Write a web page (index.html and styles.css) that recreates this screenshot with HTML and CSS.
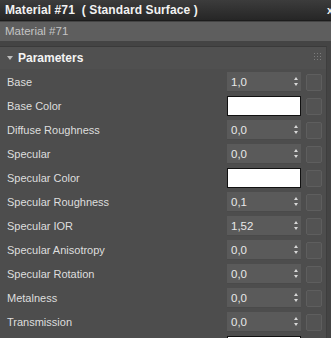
FILE: index.html
```html
<!DOCTYPE html>
<html>
<head>
<meta charset="utf-8">
<link rel="stylesheet" href="styles.css">
</head>
<body>
<div class="panel">
  <div class="titlebar">
    <span class="title">Material #71&nbsp; ( Standard Surface )</span>
    <span class="close">x</span>
  </div>
  <div class="namefield">Material #71</div>
  <div class="section">
    <div class="section-head">
      <span class="tri"></span>
      <span class="section-title">Parameters</span>
      <svg class="grip" width="7" height="7" viewBox="0 0 7 7"><g fill="#7c7c7c"><rect x="0" y="0" width="1" height="1"/><rect x="3" y="0" width="1" height="1"/><rect x="6" y="0" width="1" height="1"/><rect x="0" y="3" width="1" height="1"/><rect x="3" y="3" width="1" height="1"/><rect x="6" y="3" width="1" height="1"/><rect x="0" y="6" width="1" height="1"/><rect x="3" y="6" width="1" height="1"/><rect x="6" y="6" width="1" height="1"/></g></svg>
    </div>
    <div class="rows">
      <div class="row"><span class="label">Base</span><div class="spin"><span>1,0</span><span class="arrows"></span></div><span class="btn"></span></div>
      <div class="row"><span class="label">Base Color</span><div class="swatch"></div><span class="btn"></span></div>
      <div class="row"><span class="label">Diffuse Roughness</span><div class="spin"><span>0,0</span><span class="arrows"></span></div><span class="btn"></span></div>
      <div class="row"><span class="label">Specular</span><div class="spin"><span>0,0</span><span class="arrows"></span></div><span class="btn"></span></div>
      <div class="row"><span class="label">Specular Color</span><div class="swatch"></div><span class="btn"></span></div>
      <div class="row"><span class="label">Specular Roughness</span><div class="spin"><span>0,1</span><span class="arrows"></span></div><span class="btn"></span></div>
      <div class="row"><span class="label">Specular IOR</span><div class="spin"><span>1,52</span><span class="arrows"></span></div><span class="btn"></span></div>
      <div class="row"><span class="label">Specular Anisotropy</span><div class="spin"><span>0,0</span><span class="arrows"></span></div><span class="btn"></span></div>
      <div class="row"><span class="label">Specular Rotation</span><div class="spin"><span>0,0</span><span class="arrows"></span></div><span class="btn"></span></div>
      <div class="row"><span class="label">Metalness</span><div class="spin"><span>0,0</span><span class="arrows"></span></div><span class="btn"></span></div>
      <div class="row"><span class="label">Transmission</span><div class="spin"><span>0,0</span><span class="arrows"></span></div><span class="btn"></span></div>
      <div class="row"><span class="label"></span><div class="swatch"></div><span class="btn"></span></div>
    </div>
  </div>
</div>
</body>
</html>
```
FILE: styles.css
```css
html, body {
  margin: 0;
  padding: 0;
  background: #444444;
  overflow: hidden;
}
body {
  width: 331px;
  height: 338px;
  font-family: "Liberation Sans", Arial, sans-serif;
  font-size: 11px;
  color: #dcdcdc;
}
.panel {
  width: 331px;
  display: flex;
  flex-direction: column;
}
.titlebar {
  height: 20px;
  background: linear-gradient(#3c3c3c, #262626);
  display: flex;
  align-items: center;
  justify-content: space-between;
  padding: 0 0 0 5px;
  border-bottom: 1px solid #1c1c1c;
}
.title {
  color: #f2f2f2;
  font-weight: bold;
  font-size: 12px;
  letter-spacing: 0.1px;
}
.close {
  color: #f0f0f0;
  font-weight: bold;
  font-size: 11px;
  margin-right: -2px;
}
.namefield {
  margin-top: 1px;
  height: 19px;
  line-height: 19px;
  background: #5e5e5e;
  color: #c4c4c4;
  padding-left: 5px;
  font-size: 11.5px;
}
.section {
  margin-top: 5px;
  margin-right: 4px;
  background: #4d4d4d;
  border-right: 1px solid #3e3e3e;
  border-top: 1px solid #3a3a3a;
}
.section-head {
  height: 22px;
  display: flex;
  align-items: center;
  background: #505050;
  padding-left: 7px;
}
.tri {
  width: 0;
  height: 0;
  border-left: 3px solid transparent;
  border-right: 3px solid transparent;
  border-top: 4px solid #bdbdbd;
  margin-right: 5px;
}
.section-title {
  color: #f4f4f4;
  font-weight: bold;
  font-size: 12px;
  flex: 1;
}
.grip {
  margin-right: 5px;
  margin-top: -4px;
}
.rows {
  padding-top: 3px;
  display: flex;
  flex-direction: column;
  gap: 4px;
}
.row {
  height: 20px;
  display: flex;
  align-items: center;
  padding-left: 7px;
}
.label {
  flex: 1;
  color: #dedede;
}
.spin {
  width: 74px;
  height: 20px;
  background: #5a5a5a;
  border-bottom: 1px solid #4a4a4a;
  box-sizing: border-box;
  display: flex;
  align-items: center;
  justify-content: space-between;
  padding: 0 2px 0 4px;
  color: #e8e8e8;
  font-size: 11.5px;
}
.arrows {
  width: 5px;
  height: 9px;
  position: relative;
}
.arrows::before, .arrows::after {
  content: "";
  position: absolute;
  left: 0;
  border-left: 2.5px solid transparent;
  border-right: 2.5px solid transparent;
}
.arrows::before {
  top: 0;
  border-bottom: 3.5px solid #d8d8d8;
}
.arrows::after {
  bottom: 0;
  border-top: 3.5px solid #d8d8d8;
}
.swatch {
  width: 74px;
  height: 20px;
  box-sizing: border-box;
  background: #ffffff;
  border: 1px solid #111111;
}
.btn {
  width: 16px;
  height: 17px;
  box-sizing: border-box;
  margin-left: 5px;
  margin-right: 4px;
  border: 1px solid #5e5e5e;
  border-radius: 2px;
  background: #535353;
}
```
